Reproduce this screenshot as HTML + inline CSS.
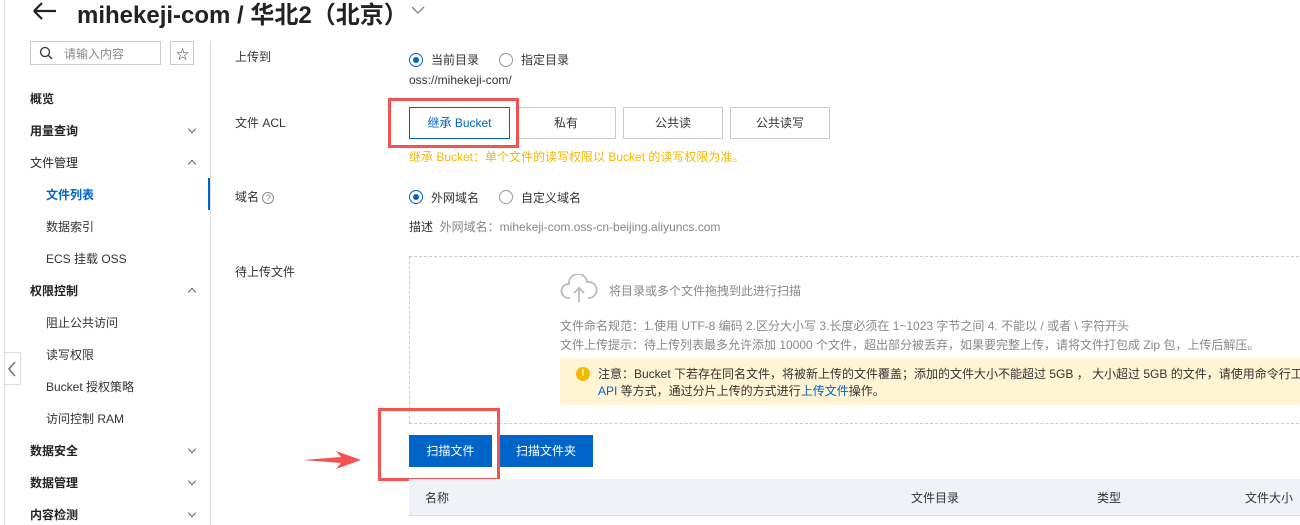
<!DOCTYPE html>
<html><head><meta charset="utf-8"><style>
*{margin:0;padding:0;box-sizing:border-box}
body{width:1300px;height:525px;overflow:hidden;background:#fff;font-family:"Liberation Sans","Noto Sans CJK SC",sans-serif;font-size:12px;color:#333;position:relative}
.a{position:absolute;white-space:nowrap}
.nav{font-size:12px;color:#333}
.b{font-weight:bold;color:#222}
.chev{position:absolute;left:189px;width:6px;height:6px;border-right:1px solid #666;border-bottom:1px solid #666}
.radio{position:absolute;width:14px;height:14px;border:1px solid #999;border-radius:50%}
.radio.on{border-color:#0064c8}
.radio.on::after{content:"";position:absolute;left:3px;top:3px;width:6px;height:6px;border-radius:50%;background:#0064c8}
.btn{position:absolute;top:107px;height:32px;border:1px solid #ccc;text-align:center;line-height:30px;font-size:12px;color:#333}
.g{color:#888}
.red{position:absolute;border:3px solid #f55353}
</style></head><body>
<div class="a" style="left:4px;top:0;width:1px;height:525px;background:#ddd"></div>
<svg class="a" style="left:32px;top:1px" width="26" height="22"><path d="M2 10H24M2 10L10 2M2 10L10 18" stroke="#222" stroke-width="2.2" fill="none"/></svg>
<div class="a" style="left:77px;top:-5px;font-size:24px;color:#222;font-weight:bold">mihekeji-com / 华北2（北京）</div>
<svg class="a" style="left:410px;top:4px" width="16" height="12"><path d="M2 3L8 9L14 3" stroke="#888" stroke-width="1.4" fill="none"/></svg>

<div class="a" style="left:30px;top:41px;width:131px;height:24px;border:1px solid #ccc"></div>
<svg class="a" style="left:39px;top:46px" width="14" height="14"><circle cx="6" cy="6" r="4.5" stroke="#333" stroke-width="1.3" fill="none"/><path d="M9.5 9.5L13 13" stroke="#333" stroke-width="1.3"/></svg>
<div class="a g" style="left:64px;top:45px">请输入内容</div>
<div class="a" style="left:170px;top:41px;width:24px;height:24px;border:1px solid #ccc"></div>
<div class="a" style="left:176px;top:44px;font-size:13px;color:#444">☆</div>
<div class="a" style="left:210px;top:41px;width:1px;height:484px;background:#ddd"></div>
<div class="a" style="left:208px;top:178px;width:2px;height:32px;background:#0064c8"></div>

<div class="a b" style="left:30px;top:90px">概览</div>
<div class="a b" style="left:30px;top:122px">用量查询</div><div class="chev" style="top:126px;transform:rotate(45deg)"></div>
<div class="a b" style="left:30px;top:154px;font-weight:normal">文件管理</div><div class="chev" style="top:161px;transform:rotate(-135deg)"></div>
<div class="a" style="left:46px;top:186px;color:#0064c8;font-weight:bold">文件列表</div>
<div class="a nav" style="left:46px;top:218px">数据索引</div>
<div class="a nav" style="left:46px;top:250px">ECS 挂载 OSS</div>
<div class="a b" style="left:30px;top:282px">权限控制</div><div class="chev" style="top:289px;transform:rotate(-135deg)"></div>
<div class="a nav" style="left:46px;top:314px">阻止公共访问</div>
<div class="a nav" style="left:46px;top:346px">读写权限</div>
<div class="a nav" style="left:46px;top:378px">Bucket 授权策略</div>
<div class="a nav" style="left:46px;top:410px">访问控制 RAM</div>
<div class="a b" style="left:30px;top:442px">数据安全</div><div class="chev" style="top:446px;transform:rotate(45deg)"></div>
<div class="a b" style="left:30px;top:474px">数据管理</div><div class="chev" style="top:478px;transform:rotate(45deg)"></div>
<div class="a b" style="left:30px;top:506px">内容检测</div><div class="chev" style="top:510px;transform:rotate(45deg)"></div>
<div class="a" style="left:5px;top:352px;width:16px;height:33px;border:1px solid #ddd;border-left:none;background:#fff"></div>
<svg class="a" style="left:7px;top:360px" width="10" height="18"><path d="M8 2L2 9L8 16" stroke="#777" stroke-width="1.6" fill="none"/></svg>

<div class="a" style="left:235px;top:48px">上传到</div>
<div class="a" style="left:235px;top:114px">文件 ACL</div>
<div class="a" style="left:235px;top:188px">域名 <span style="display:inline-block;width:12px;height:12px;border:1px solid #888;border-radius:50%;font-size:9px;text-align:center;line-height:10px;color:#888">?</span></div>
<div class="a" style="left:235px;top:263px">待上传文件</div>

<div class="radio on" style="left:409px;top:53px"></div><div class="a" style="left:431px;top:51px">当前目录</div>
<div class="radio" style="left:499px;top:53px"></div><div class="a" style="left:521px;top:51px">指定目录</div>
<div class="a" style="left:409px;top:73px">oss://mihekeji-com/</div>

<div class="btn" style="left:409px;width:101px;border-color:#0064c8;color:#0064c8">继承 Bucket</div>
<div class="btn" style="left:516px;width:100px">私有</div>
<div class="btn" style="left:623px;width:100px">公共读</div>
<div class="btn" style="left:730px;width:100px">公共读写</div>
<div class="red" style="left:388px;top:98px;width:131px;height:50px"></div>
<div class="a" style="left:409px;top:148px;color:#f5b800">继承 Bucket：单个文件的读写权限以 Bucket 的读写权限为准。</div>

<div class="radio on" style="left:409px;top:190px"></div><div class="a" style="left:431px;top:189px">外网域名</div>
<div class="radio" style="left:499px;top:190px"></div><div class="a" style="left:521px;top:189px">自定义域名</div>
<div class="a" style="left:409px;top:218px">描述 <span class="g">&nbsp;外网域名：mihekeji-com.oss-cn-beijing.aliyuncs.com</span></div>

<div class="a" style="left:409px;top:256px;width:900px;height:168px;border:1px dashed #ccc"></div>
<svg class="a" style="left:560px;top:274px" width="38" height="30"><path d="M10 24H8A7 7 0 0 1 9 10A9 9 0 0 1 27 8A7 7 0 0 1 30 24H28M19 28V15M14 19L19 14L24 19" stroke="#bbb" stroke-width="1.8" fill="none"/></svg>
<div class="a g" style="left:609px;top:282px">将目录或多个文件拖拽到此进行扫描</div>
<div class="a g" style="left:560px;top:317px">文件命名规范：1.使用 UTF-8 编码 2.区分大小写 3.长度必须在 1~1023 字节之间 4. 不能以 / 或者 \ 字符开头</div>
<div class="a g" style="left:560px;top:336px">文件上传提示：待上传列表最多允许添加 10000 个文件，超出部分被丢弃，如果要完整上传，请将文件打包成 Zip 包，上传后解压。</div>
<div class="a" style="left:560px;top:358px;width:760px;height:47px;background:#fff5d4"></div>
<div class="a" style="left:576px;top:367px;width:14px;height:14px;border-radius:50%;background:#f5b800;color:#fff;font-size:10px;font-weight:bold;text-align:center;line-height:14px">!</div>
<div class="a" style="left:598px;top:365px;color:#333">注意：Bucket 下若存在同名文件，将被新上传的文件覆盖；添加的文件大小不能超过 5GB ， 大小超过 5GB 的文件，请使用命令行工具</div>
<div class="a" style="left:598px;top:382px;color:#333"><span style="color:#0064c8">API</span> 等方式，通过分片上传的方式进行<span style="color:#0064c8">上传文件</span>操作。</div>

<div class="a" style="left:409px;top:435px;width:83px;height:32px;background:#0064c8;color:#fff;text-align:center;line-height:32px">扫描文件</div>
<div class="a" style="left:499px;top:435px;width:94px;height:32px;background:#0064c8;color:#fff;text-align:center;line-height:32px">扫描文件夹</div>
<div class="red" style="left:378px;top:408px;width:122px;height:73px"></div>
<svg class="a" style="left:303px;top:450px" width="58" height="20"><path d="M0 10L38 7L33 1L58 10L33 19L38 13Z" fill="#f55353"/></svg>

<div class="a" style="left:409px;top:479px;width:900px;height:37px;background:#eff2f7;border-bottom:1px solid #ddd"></div>
<div class="a" style="left:425px;top:489px">名称</div>
<div class="a" style="left:911px;top:489px">文件目录</div>
<div class="a" style="left:1097px;top:489px">类型</div>
<div class="a" style="left:1245px;top:489px">文件大小</div>
</body></html>
